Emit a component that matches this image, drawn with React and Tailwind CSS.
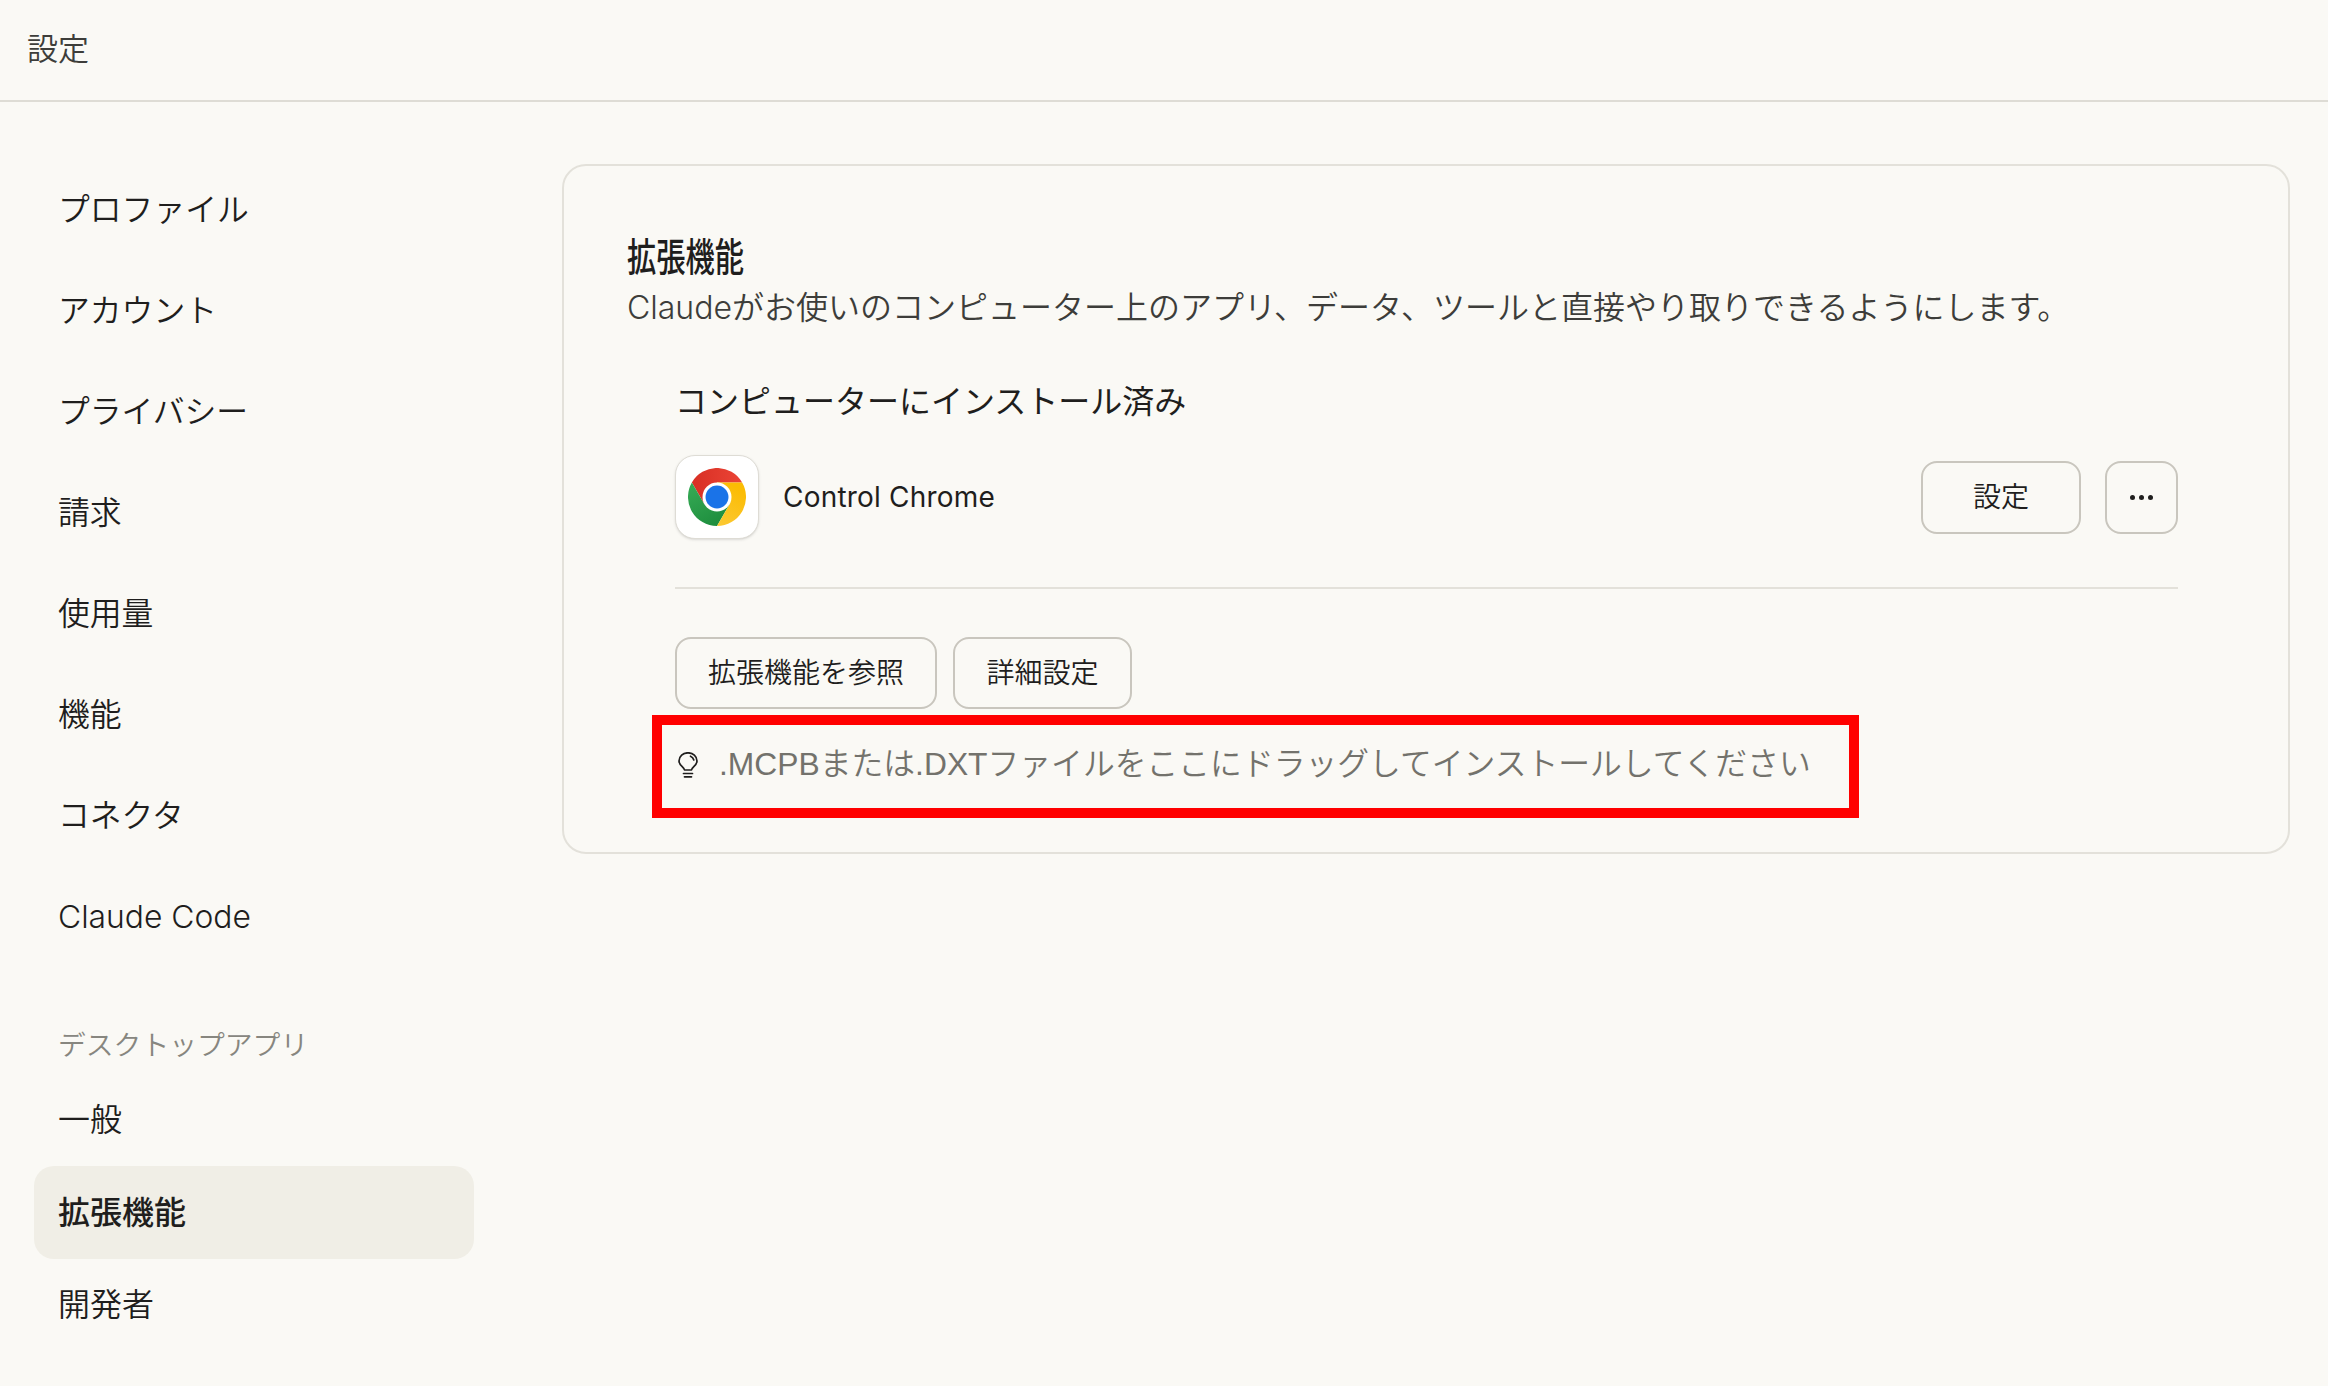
const sans = "font-['Inter','Noto_Sans_CJK_JP',sans-serif]";

function Chrome() {
  return (
    <svg width="58" height="58" viewBox="0 0 48 48">
      <defs>
        <linearGradient id="r" x1="6" y1="8" x2="42" y2="8" gradientUnits="userSpaceOnUse">
          <stop offset="0" stopColor="#d93025" />
          <stop offset="1" stopColor="#ea4335" />
        </linearGradient>
        <linearGradient id="g" x1="26" y1="45" x2="8" y2="14" gradientUnits="userSpaceOnUse">
          <stop offset="0" stopColor="#1e8e3e" />
          <stop offset="1" stopColor="#34a853" />
        </linearGradient>
        <linearGradient id="y" x1="20" y1="46" x2="38" y2="15" gradientUnits="userSpaceOnUse">
          <stop offset="0" stopColor="#fcc934" />
          <stop offset="1" stopColor="#fbbc04" />
        </linearGradient>
      </defs>
      <path d="M44.8 12 A24 24 0 0 0 3.2 12 L13.6 30 L24 24 L24 12 Z" fill="url(#r)" />
      <path d="M3.2 12 A24 24 0 0 0 24 48 L34.4 30 L24 24 L13.6 30 Z" fill="url(#g)" />
      <path d="M24 48 A24 24 0 0 0 44.8 12 L24 12 L24 24 L34.4 30 Z" fill="url(#y)" />
      <circle cx="24" cy="24" r="12" fill="#fff" />
      <circle cx="24" cy="24" r="9.5" fill="#1a73e8" />
    </svg>
  );
}

function Bulb() {
  return (
    <svg width="22" height="26" viewBox="0 0 22 26" fill="none" stroke="#1f1e1d" strokeWidth="1.7" strokeLinecap="round" strokeLinejoin="round">
      <path d="M7.5 18 C7.2 15.2 2 13.5 2 9 A9 8.2 0 0 1 20 9 C20 13.5 14.8 15.2 14.5 18 Z" />
      <path d="M13.5 4.2 C15.2 5 16.3 6.2 16.8 8" />
      <path d="M6.5 21.5 H15.5" />
      <path d="M7.5 24.8 H14.5" />
    </svg>
  );
}

const top = ["プロファイル", "アカウント", "プライバシー", "請求", "使用量", "機能", "コネクタ", "Claude Code"];

export default function App() {
  return (
    <div className={`${sans} relative w-[2328px] h-[1386px] overflow-hidden bg-[#faf9f5] text-[#1f1e1d] font-[350]`}>
      <header className="h-[102px] border-b-2 border-[#dedcd5] flex items-center pl-[27px] text-[31px] text-[#3d3d3a]">
        <span className="-mt-[2px]">設定</span>
      </header>
      <div className="flex">
        <aside className="w-[562px] shrink-0 pl-[34px] pt-[57px]">
          <nav className="w-[440px] flex flex-col">
            {top.map((t) => (
              <div key={t} className="h-[101px] flex items-center pl-[24px] text-[31.8px]">{t}</div>
            ))}
          </nav>
          <div className="mt-[59px] h-[40px] flex items-center pl-[24px] text-[27.8px] text-[#87867f]">デスクトップアプリ</div>
          <div className="h-[92px] mt-[8px] flex items-center pl-[24px] text-[32px]">一般</div>
          <div className="h-[93px] flex items-center pl-[24px] text-[32px] font-medium bg-[#f0eee6] rounded-[20px] w-[440px]">拡張機能</div>
          <div className="h-[92px] flex items-center pl-[24px] text-[32px]">開発者</div>
        </aside>
        <main className="pt-[62px]">
          <section className="w-[1728px] h-[690px] border-2 border-[#e3e1da] rounded-[24px] pl-[63px] pr-[110px] pt-[67px]">
            <h1 className="text-[39px] leading-[48px] font-medium origin-left scale-x-[0.75]">拡張機能</h1>
            <p className="mt-[5px] text-[32px] leading-[44px] text-[#3d3d3a] whitespace-nowrap">Claudeがお使いのコンピューター上のアプリ、データ、ツールと直接やり取りできるようにします。</p>
            <div className="pl-[48px] pt-[52px]">
              <h2 className="text-[32px] leading-[40px] font-normal">コンピューターにインストール済み</h2>
              <div className="mt-[33px] pb-[48px] border-b-2 border-[#e3e1da] flex items-center">
                <div className="w-[84px] h-[84px] rounded-[20px] bg-white border border-[#dedcd5] shadow-sm flex items-center justify-center">
                  <Chrome />
                </div>
                <span className="ml-[24px] text-[28px] tracking-[0.2px] font-normal">Control Chrome</span>
                <button className="ml-auto w-[160px] h-[73px] border-2 border-[#c9c6be] rounded-[16px] text-[28px]">設定</button>
                <button className="ml-[24px] w-[73px] h-[73px] border-2 border-[#c9c6be] rounded-[16px] flex items-center justify-center gap-[4px]">
                  <span className="w-[5px] h-[5px] rounded-full bg-[#1f1e1d]" />
                  <span className="w-[5px] h-[5px] rounded-full bg-[#1f1e1d]" />
                  <span className="w-[5px] h-[5px] rounded-full bg-[#1f1e1d]" />
                </button>
              </div>
              <div className="mt-[48px] flex gap-[16px]">
                <button className="w-[262px] h-[72px] border-2 border-[#c9c6be] rounded-[16px] text-[28px]">拡張機能を参照</button>
                <button className="w-[179px] h-[72px] border-2 border-[#c9c6be] rounded-[16px] text-[28px]">詳細設定</button>
              </div>
              <div className="mt-[32px] flex items-center gap-[20px] text-[31.8px] text-[#73726c]">
                <span className="ml-[2px] flex"><Bulb /></span>
                <span className="font-['Liberation_Sans','Noto_Sans_CJK_JP',sans-serif]">.MCPBまたは.DXTファイルをここにドラッグしてインストールしてください</span>
              </div>
            </div>
          </section>
        </main>
      </div>
      <div className="absolute left-[652px] top-[715px] w-[1207px] h-[103px] border-[10px] border-[#ff0000]" />
    </div>
  );
}
